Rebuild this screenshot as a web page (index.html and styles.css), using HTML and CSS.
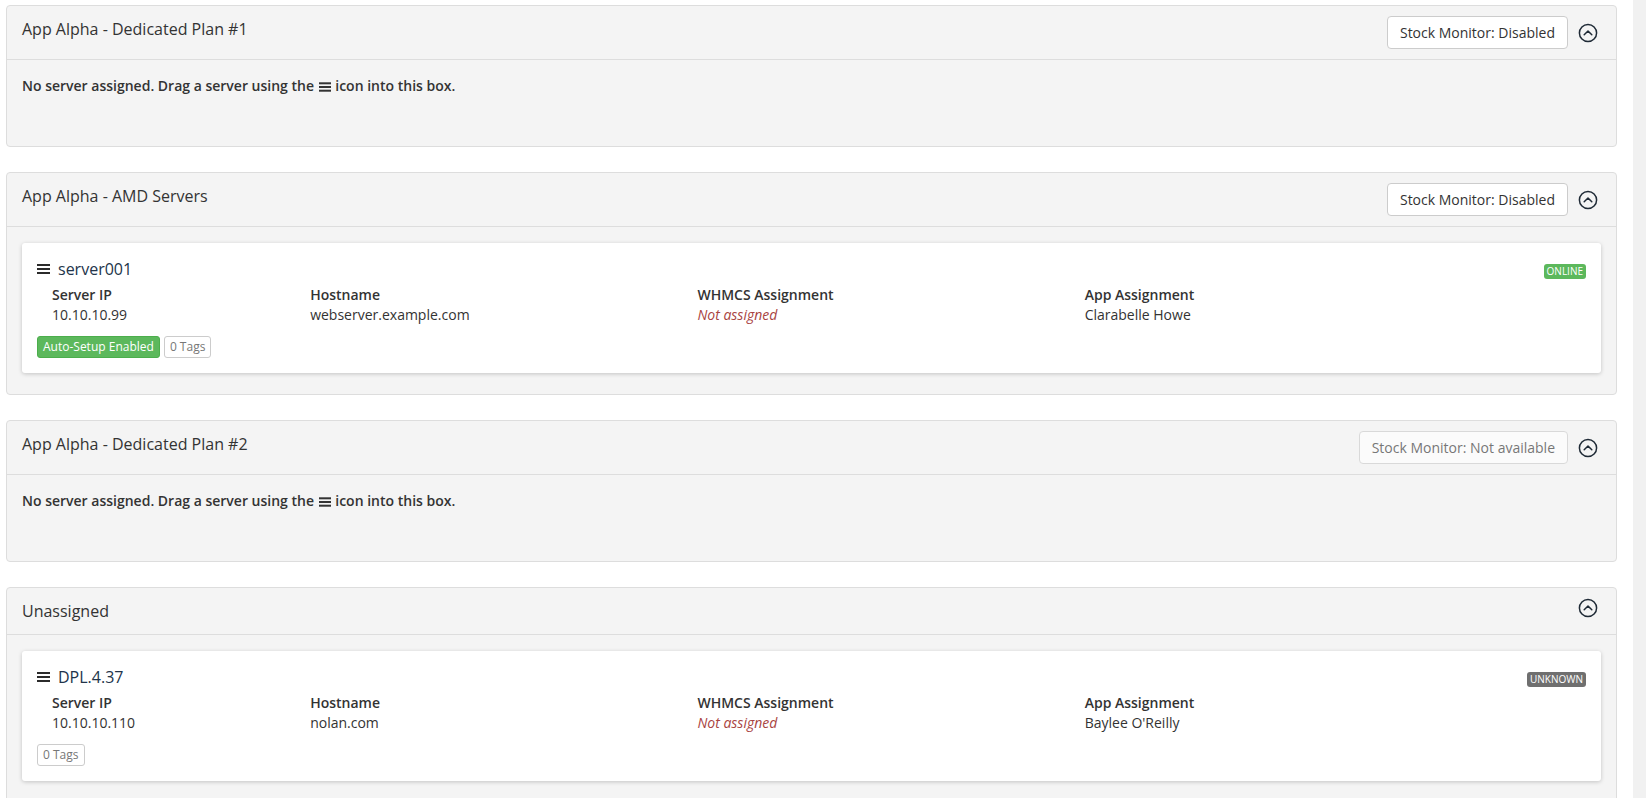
FILE: index.html
```html
<!DOCTYPE html>
<html lang="en">
<head>
<meta charset="utf-8">
<title>Server assignments</title>
<link rel="stylesheet" href="styles.css">
</head>
<body>
<div class="page">

  <section class="panel">
    <header class="panel-heading">
      <h3 class="panel-title">App Alpha - Dedicated Plan #1</h3>
      <div class="heading-actions">
        <button class="btn">Stock Monitor: Disabled</button>
        <svg class="collapse-icon" viewBox="0 0 20 20"><circle cx="10" cy="10" r="8.6"/><path d="M6.2 11.8 L10 8 L13.8 11.8"/></svg>
      </div>
    </header>
    <div class="panel-body">
      <p class="empty">No server assigned. Drag a server using the <svg class="bars-inline" viewBox="0 0 12 10"><rect x="0" y="0.3" width="12" height="2"/><rect x="0" y="4" width="12" height="2"/><rect x="0" y="7.7" width="12" height="2"/></svg> icon into this box.</p>
    </div>
  </section>

  <section class="panel">
    <header class="panel-heading">
      <h3 class="panel-title">App Alpha - AMD Servers</h3>
      <div class="heading-actions">
        <button class="btn">Stock Monitor: Disabled</button>
        <svg class="collapse-icon" viewBox="0 0 20 20"><circle cx="10" cy="10" r="8.6"/><path d="M6.2 11.8 L10 8 L13.8 11.8"/></svg>
      </div>
    </header>
    <div class="panel-body">
      <article class="server">
        <div class="server-head">
          <div class="server-name">
            <svg class="bars" viewBox="0 0 13 10"><rect x="0" y="0" width="13" height="2"/><rect x="0" y="4" width="13" height="2"/><rect x="0" y="8" width="13" height="2"/></svg>
            <span>server001</span>
          </div>
          <span class="label label-success">ONLINE</span>
        </div>
        <div class="server-grid">
          <div class="cell"><div class="field">Server IP</div><div class="value">10.10.10.99</div></div>
          <div class="cell"><div class="field">Hostname</div><div class="value">webserver.example.com</div></div>
          <div class="cell"><div class="field">WHMCS Assignment</div><div class="value missing">Not assigned</div></div>
          <div class="cell"><div class="field">App Assignment</div><div class="value">Clarabelle Howe</div></div>
        </div>
        <div class="tags">
          <span class="tag tag-green">Auto-Setup Enabled</span>
          <span class="tag tag-plain">0 Tags</span>
        </div>
      </article>
    </div>
  </section>

  <section class="panel">
    <header class="panel-heading">
      <h3 class="panel-title">App Alpha - Dedicated Plan #2</h3>
      <div class="heading-actions">
        <button class="btn btn-disabled" disabled>Stock Monitor: Not available</button>
        <svg class="collapse-icon" viewBox="0 0 20 20"><circle cx="10" cy="10" r="8.6"/><path d="M6.2 11.8 L10 8 L13.8 11.8"/></svg>
      </div>
    </header>
    <div class="panel-body">
      <p class="empty">No server assigned. Drag a server using the <svg class="bars-inline" viewBox="0 0 12 10"><rect x="0" y="0.3" width="12" height="2"/><rect x="0" y="4" width="12" height="2"/><rect x="0" y="7.7" width="12" height="2"/></svg> icon into this box.</p>
    </div>
  </section>

  <section class="panel">
    <header class="panel-heading">
      <h3 class="panel-title">Unassigned</h3>
      <div class="heading-actions">
        <svg class="collapse-icon" viewBox="0 0 20 20"><circle cx="10" cy="10" r="8.6"/><path d="M6.2 11.8 L10 8 L13.8 11.8"/></svg>
      </div>
    </header>
    <div class="panel-body">
      <article class="server">
        <div class="server-head">
          <div class="server-name">
            <svg class="bars" viewBox="0 0 13 10"><rect x="0" y="0" width="13" height="2"/><rect x="0" y="4" width="13" height="2"/><rect x="0" y="8" width="13" height="2"/></svg>
            <span>DPL.4.37</span>
          </div>
          <span class="label label-default">UNKNOWN</span>
        </div>
        <div class="server-grid">
          <div class="cell"><div class="field">Server IP</div><div class="value">10.10.10.110</div></div>
          <div class="cell"><div class="field">Hostname</div><div class="value">nolan.com</div></div>
          <div class="cell"><div class="field">WHMCS Assignment</div><div class="value missing">Not assigned</div></div>
          <div class="cell"><div class="field">App Assignment</div><div class="value">Baylee O'Reilly</div></div>
        </div>
        <div class="tags">
          <span class="tag tag-plain">0 Tags</span>
        </div>
      </article>
    </div>
  </section>

</div>
<div class="scroll-track"></div>
</body>
</html>
```

FILE: styles.css
```css
* { box-sizing: border-box; }

html, body {
  margin: 0;
  padding: 0;
  background: #ffffff;
}

body {
  display: flex;
  min-height: 100vh;
  font-family: "Open Sans", "Noto Sans", "Liberation Sans", sans-serif;
  font-size: 14px;
  line-height: 20px;
  color: #333333;
}

.page {
  flex: 1;
  min-width: 0;
  padding: 5px 16px 20px 6px;
}

.scroll-track {
  flex: 0 0 13px;
  background: #f1f1f1;
}

.panel {
  background: #f4f4f4;
  border: 1px solid #dddddd;
  border-radius: 4px;
  margin-bottom: 25px;
}

.panel-heading {
  display: flex;
  align-items: flex-start;
  justify-content: space-between;
  padding: 10px 15px;
  border-bottom: 1px solid #dddddd;
}

.panel-title {
  margin: 0;
  font-size: 16px;
  font-weight: 400;
  line-height: 26px;
  color: #333333;
}

.heading-actions {
  display: flex;
  align-items: center;
}

.btn {
  font-family: inherit;
  font-size: 14px;
  line-height: 19px;
  padding: 6px 12px;
  color: #333333;
  background: #ffffff;
  border: 1px solid #cccccc;
  border-radius: 4px;
}

.btn-disabled {
  opacity: 0.65;
}

.collapse-icon {
  width: 20px;
  height: 20px;
  margin-left: 10px;
  margin-right: 3px;
  fill: none;
  stroke: #1f2a36;
  stroke-width: 1.5;
  stroke-linecap: round;
  stroke-linejoin: round;
}

.panel-body {
  padding: 16px 15px 15px;
}

.empty {
  margin: 0;
  min-height: 55px;
  font-weight: 600;
}

.bars-inline {
  width: 12px;
  height: 10px;
  fill: #333333;
  vertical-align: -1px;
  margin: 0 1px;
}

.server {
  background: #ffffff;
  border-radius: 3px;
  box-shadow: 0 1px 4px rgba(0, 0, 0, 0.2);
  padding: 15px;
  margin-bottom: 6px;
}

.server-head {
  display: flex;
  align-items: center;
  justify-content: space-between;
  height: 22px;
  margin-bottom: 5px;
}

.server-name {
  display: flex;
  align-items: center;
  font-size: 16px;
  color: #22344a;
}

.bars {
  width: 13px;
  height: 10px;
  fill: #2b2b2b;
  margin-right: 8px;
}

.label {
  display: inline-block;
  font-size: 10px;
  line-height: 10px;
  padding: 2px 3px 3px;
  color: #ffffff;
  border-radius: 3px;
  margin-top: 4px;
}

.label-success { background: #5cb85c; }
.label-default { background: #6f6f6f; }

.server-grid {
  display: grid;
  grid-template-columns: 2fr 3fr 3fr 4fr;
}

.cell {
  padding-left: 15px;
}

.field {
  font-weight: 600;
}

.missing {
  font-style: italic;
  color: #a94442;
}

.tags {
  display: flex;
  gap: 4px;
  margin-top: 11px;
}

.tag {
  display: inline-block;
  font-size: 12px;
  line-height: 20px;
  padding: 0 5px;
  border-radius: 3px;
  border: 1px solid transparent;
}

.tag-green {
  background: #5cb85c;
  border-color: #4cae4c;
  color: #ffffff;
}

.tag-plain {
  background: #ffffff;
  border-color: #cccccc;
  color: #777777;
}
```
